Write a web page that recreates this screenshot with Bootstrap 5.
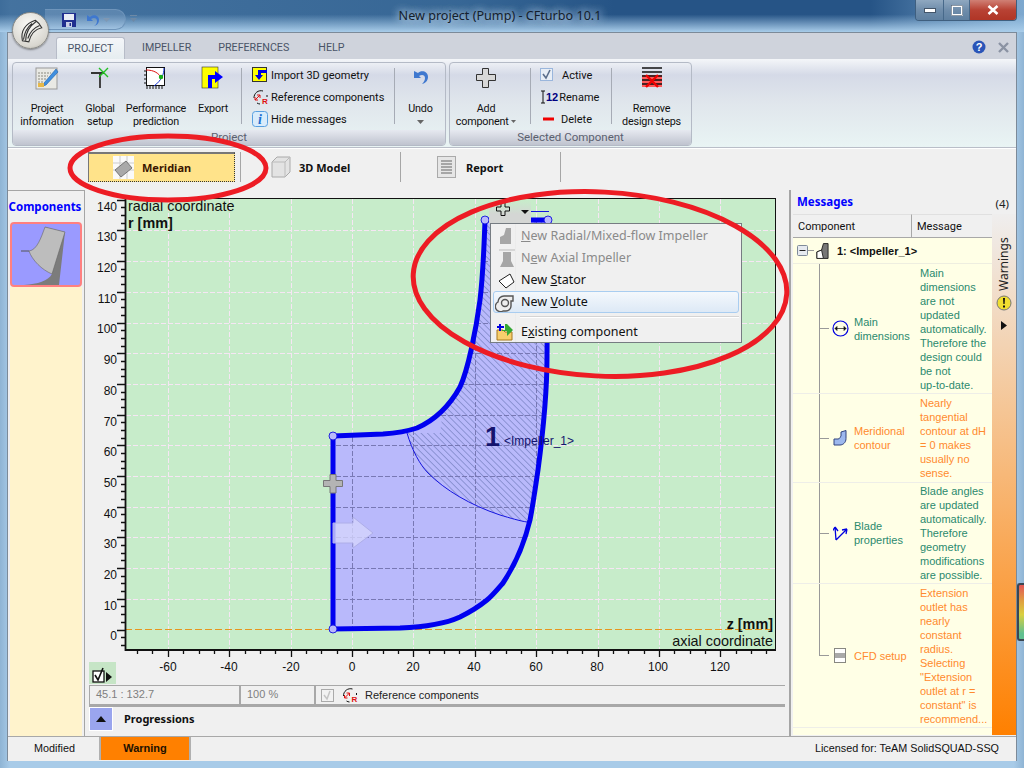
<!DOCTYPE html>
<html lang="en">
<head>
<meta charset="utf-8">
<title>New project (Pump) - CFturbo 10.1</title>
<link href="https://cdn.jsdelivr.net/npm/bootstrap@5.3.0/dist/css/bootstrap.min.css" rel="stylesheet">
<style>
html,body{margin:0;height:768px;overflow:hidden}
body{width:1024px;position:relative;font-family:"Roboto","Liberation Sans",sans-serif;font-size:11px;line-height:13px;color:#111;background:#a9cdea}
.frame{width:1024px;height:768px;background:linear-gradient(90deg,#8fb4d4,#a8cbe8 1%,#a8cbe8 99%,#8fb4d4)}
.titlebar{height:32px;position:relative;background:linear-gradient(90deg,rgba(35,85,135,.75),rgba(35,85,135,.85) 45%,rgba(38,84,134,1) 60%,rgba(38,84,134,1) 85%,rgba(120,165,205,.8) 100%);}
.titlebar::after{content:"";position:absolute;inset:0;background:linear-gradient(180deg,rgba(169,205,234,0) 0,rgba(169,205,234,0) 45%,#a9cdea 100%)}
.title-text{position:relative;z-index:1;font-family:"Noto Sans",sans-serif;font-size:12.6px;color:#14202c;line-height:32px;text-align:center;width:1000px;text-shadow:0 0 8px #cfe3f5,0 0 8px #cfe3f5}
.logo-ball{position:absolute;left:12px;top:12px;width:37px;height:37px;border-radius:50%;background:radial-gradient(circle at 45% 35%,#fbfbf8,#d9d7d0 70%,#a5a39a);border:1px solid #8a8a86;box-shadow:0 1px 2px #0006;z-index:4}
.qat{position:absolute;left:45px;top:9px;width:81px;height:21px;border:1px solid #6f95bb;border-left:0;border-radius:0 11px 11px 0;background:rgba(190,215,240,.22);z-index:3}
.qat-ico{position:absolute;z-index:3}
.winbtns{position:absolute;right:7px;top:0;width:102px;height:21px;z-index:3;border:1px solid #3f5f7f;border-top:0;border-radius:0 0 4px 4px;overflow:hidden}
.winbtn{height:100%;background:linear-gradient(#8fa8c0,#6f8dab 50%,#5f80a0);border-right:1px solid #47698a}
.winbtn.closer{background:linear-gradient(#d08075,#b84234 50%,#b03526);border:0}
.client{height:728px;background:#f0f0f0;border:1px solid #7c8a99;border-width:1px 1px 0 1px;box-sizing:content-box;margin-left:7px;width:1008px}
.rtabs{height:26px;background:#cfd3dc;padding-left:48px;font-size:10.7px;color:#4a5468;position:relative}
.rtab{height:22px;line-height:22px;margin-top:4px;flex:none}
.rtab.on{background:linear-gradient(#f4f6f9,#e6edf0);border:1px solid #b7bcc8;border-bottom:0;border-radius:3px 3px 0 0;width:69px;text-align:center}
.rbar{height:89px;background:linear-gradient(#f4f6f9,#d5dae7 18%,#e0e6ec 50%,#e9f4f4);border-bottom:1px solid #b9bec8;padding:3px 0 2px 4px;gap:3px}
.rgroup{height:84px;border:1px solid #b4bac6;border-radius:4px;position:relative;flex:none}
.rcap{position:absolute;left:0;right:0;bottom:0;height:15px;line-height:15px;text-align:center;font-size:11.5px;color:#5b6070;background:linear-gradient(#e6e9f0,#bfc3cf);border-radius:0 0 3px 3px}
.rbig{text-align:center;padding-top:3px;height:66px;white-space:nowrap;flex:none;font-size:10.8px;letter-spacing:-.2px}
.rbig>svg:first-child{display:block;margin:0 auto 12px}
.rsep{width:1px;height:56px;background:#a6abb5;margin-top:5px;flex:none}
.rsmall{height:22px;white-space:nowrap;gap:3px}
.rsmall svg{flex:none}
.rsmall:first-child{margin-top:1px}
.vbar{height:42px;background:#f0f0f0;border-top:1px solid #fff;padding-left:80px;font-family:"Noto Sans",sans-serif;font-weight:700;font-size:11px}
.vtab{height:30px;margin-top:3px;border-right:1px solid #a6a6a6;gap:8px;flex:none}
.vtab.on{width:153px;padding-right:5px}
.vin{background:#ffe38a;border:1px dotted #333;border-left:1px solid #777;border-top:2px solid #777;height:30px;width:148px;padding-left:24px;gap:8px}
.mainrow{height:546px}
.leftp{width:77px;border:1px solid #a5a5a5;border-width:1px 1px 0 0;padding:0 2px;flex:none}
.leftp-h{height:31px;color:#0000ff;font-family:"Noto Sans",sans-serif;font-weight:700;font-size:11.5px;line-height:31px;text-align:center;white-space:nowrap;margin-left:-2px}
.thumb{width:72px;height:65px;border:2px solid #ff8080;border-radius:4px;background:#9a9aff;overflow:hidden}
.cream{background:#fff3cc;height:449px}
.midc{width:704px;padding:0 4px;flex:none}
.plot{display:block;margin-left:-4px}
.plot text{font-family:"Liberation Sans",sans-serif;font-size:12px;fill:#111}
.infor{height:19px;border-top:1px solid #a8a8a8;border-left:1px solid #a8a8a8;color:#7f7f7f;font-family:"Liberation Sans",sans-serif;font-size:11px;line-height:17px}
.icell{border-right:2px solid #a8a8a8;padding-left:6px;white-space:nowrap;flex:none}
.prog{height:28px;border-top:3px solid #a8a8a8;padding-top:0;gap:11px;font-family:"Noto Sans",sans-serif;font-weight:700;font-size:11px;color:#111}
.progbtn{width:24px;height:24px;background:#9aa5ee;border:1px solid #fff}
.rightp{width:227px;border-left:2px solid #a5a5a5;padding-left:2px;flex:none}
.msg-h{height:24px;font-family:"Noto Sans",sans-serif;font-weight:700;color:#0000ff;font-size:11.5px;line-height:24px;padding:0 7px 0 4px}
.th{height:24px;line-height:24px;padding-left:5px;font-size:11px;background:#f0f0f0;border-top:1px solid #e0e0e0;border-bottom:1px solid #a8a8a8}
.tree{width:199px;background:#ffffe6;height:497px;font-family:"Liberation Sans",sans-serif;font-size:11px;line-height:14px}
.troot{height:26px;font-weight:700;font-size:11px;padding-left:4px;color:#111;border-bottom:1px solid #eeeee0}
.trow{border-bottom:1px solid #eeeee8;padding-left:26px;white-space:nowrap}
.rail{width:10px;flex:none;background:linear-gradient(#999,#999) left top/1px 100% no-repeat,linear-gradient(#999,#999) left center/10px 1px no-repeat}
.rail.lastr{background:linear-gradient(#999,#999) left top/1px 50% no-repeat,linear-gradient(#999,#999) left center/10px 1px no-repeat}
.tico{width:25px;flex:none;padding-left:3px}
.tname{width:66px;flex:none}
.tmsg{padding-top:2px;padding-bottom:2px}
.tgreen{color:#2b8a6e}
.torange{color:#ff8a2e}
.strip{width:24px;height:521px;background:linear-gradient(#efeeee,#f7b878 50%,#ff8000);padding-top:19px}
.vtext{writing-mode:vertical-rl;transform:rotate(180deg);line-height:24px;height:58px;color:#222;font-family:"Noto Sans",sans-serif;font-size:12px}
.stat{height:24px;border-top:1px solid #a8a8a8;background:#f0f0f0;padding-left:2px;font-size:10.8px;font-family:"Liberation Sans",sans-serif}
.scell{height:23px;line-height:22px;text-align:center;border-right:2px solid #b0b0b0;flex:none}
.over{position:absolute;left:0;top:0;pointer-events:none;z-index:20}
.ctxbar{position:absolute;left:489px;top:200px;width:42px;height:24px;background:linear-gradient(rgba(212,214,212,0),#d4d6d4 60%);z-index:10}
.ctx{position:absolute;left:490px;top:223px;width:252px;height:120px;display:block;padding:1px 2px 0;margin:0;min-width:0;border:1px solid #767c82;border-radius:0;background:linear-gradient(90deg,#f0f0f0 24px,#d8d8d8 24px,#fff 25px,#f0f0f0 25px);color:#111;z-index:10;font-family:"Noto Sans",sans-serif}
.ctx-i{height:22px;padding:0 0 0 27px;font-size:12.5px;line-height:20px;position:relative;color:#111;border:1px solid transparent;white-space:nowrap}
.ctx-i svg{position:absolute;left:1px;top:0}
.ctx-i.off{color:#8a8a8a}
.ctx-i.hov{background:linear-gradient(#f4f8fc,#dde9f6);border-color:#a9cdf0;border-radius:3px}
.ctx-sep{height:1px;background:#d4d4d4;margin:3px 0 3px 27px;border-bottom:1px solid #fff;box-sizing:content-box}
.edgebit{position:absolute;left:1017px;top:583px;width:7px;height:58px;background:linear-gradient(#e25757,#e0a040 30%,#d9d040 55%,#60c090 90%);border:2px solid #3b4652;border-right:0;border-radius:3px 0 0 3px;z-index:5}
.lic{white-space:nowrap;padding-right:17px}
</style>
</head>
<body>
<div class="frame d-flex flex-column">
  <div class="titlebar">
    <div class="title-text">New project (Pump) - CFturbo 10.1</div>
    <div class="logo-ball d-flex align-items-center justify-content-center">
      <svg width="28" height="28" viewBox="0 0 26 26" fill="none" stroke="#333" stroke-width="1"><path d="M5 22C3 13 8 6 17 3c3 2 5 5 6 7-5 1-10 5-12 13z"/><path d="M8 22c0-7 3-13 10-18M14 6c-4 3-7 8-8 15M21 8c-5 2-9 6-11 12"/></svg>
    </div>
    <div class="qat"></div>
    <svg class="qat-ico" style="left:62px;top:13px" width="14" height="14" viewBox="0 0 14 14"><path d="M0 0h14v14H0z" fill="#1f2f8f"/><path d="M2 1h10v6H2z" fill="#e8ecf5"/><path d="M4 9h6v5H4z" fill="#c8cfe6"/><path d="M7.500 10h1.500v3H7.500z" fill="#1f2f8f"/></svg>
    <svg class="qat-ico" style="left:86px;top:13px" width="13" height="14" viewBox="0 0 13 14"><path d="M1 2v6h6L5 6c3-2 6-1 6 2 0 2-1 4-3 5 4-1 5-4 5-6 0-5-6-6-9-3z" fill="#3f78cf"/></svg>
    <svg class="qat-ico" style="left:103px;top:18px;z-index:5" width="7" height="4"><path d="M0 0h7L3.500 4z" fill="#7f98b3"/></svg>
    <svg class="qat-ico" style="left:130px;top:15px;z-index:5" width="7" height="8"><path d="M0 0h7v1H0zM0 3h7L3.500 7z" fill="#6d89a6"/></svg>
    <div class="winbtns d-flex">
      <div class="winbtn d-flex align-items-center justify-content-center" style="width:28px"><svg width="12" height="6"><rect x=".5" y="1.500" width="11" height="4" fill="#fff" stroke="#44566a"/></svg></div>
      <div class="winbtn d-flex align-items-center justify-content-center" style="width:26px"><svg width="12" height="11"><rect x="1" y="1" width="10" height="9" fill="none" stroke="#fff" stroke-width="2"/><rect x=".5" y=".5" width="11" height="10" fill="none" stroke="#44566a" stroke-width=".6"/></svg></div>
      <div class="winbtn closer flex-grow-1 d-flex align-items-center justify-content-center"><svg width="12" height="10"><path d="M1.500 1l9 8M10.500 1l-9 8" stroke="#fff" stroke-width="2.600"/></svg></div>
    </div>
  </div>

  <div class="client">
    <div class="rtabs d-flex">
      <div class="rtab on">PROJECT</div>
      <div class="rtab" style="margin-left:17px">IMPELLER</div>
      <div class="rtab" style="margin-left:27px">PREFERENCES</div>
      <div class="rtab" style="margin-left:29px">HELP</div>
      <div class="ms-auto d-flex align-items-center gap-2 pe-1" style="padding-top:2px">
        <svg width="14" height="14" viewBox="0 0 14 14"><circle cx="7" cy="7" r="6.500" fill="#2a55b8"/><text x="7" y="11" text-anchor="middle" font-family="Liberation Sans" font-weight="700" font-size="11" fill="#fff">?</text></svg>
        <svg width="11" height="11" class="ms-1" style="margin-right:3px"><path d="M1 1l9 9M10 1l-9 9" stroke="#8b93a3" stroke-width="2.400"/></svg>
      </div>
    </div>

    <div class="rbar d-flex">
      <div class="rgroup d-flex" style="width:434px">
        <div class="rbig" style="width:68px">
          <svg width="24" height="24" viewBox="0 0 24 24"><rect x="1" y="2" width="21" height="21" fill="#e9e9e4" stroke="#999"/><path d="M3 7h13M3 10h10M3 13h8M3 16h6" stroke="#8a8a80" stroke-dasharray="2 1"/><path d="M9 17 21 3l2 3-12 13-3 1z" fill="#3f8fe0" stroke="#1f5fa8" stroke-width=".6"/><rect x="3" y="17" width="6" height="4" fill="#e6b84a"/></svg>
          Project<br>information
        </div>
        <div class="rbig" style="width:38px">
          <svg width="24" height="24" viewBox="0 0 24 24"><path d="M3 7h13M12 7v15" stroke="#333" stroke-width="1.800" fill="none"/><path d="M11 2l9 9M20 2l-9 9" stroke="#22c022" stroke-width="1.400"/></svg>
          Global<br>setup
        </div>
        <div class="rbig" style="width:74px">
          <svg width="24" height="24" viewBox="0 0 24 24"><rect x="2.500" y="1.500" width="18" height="18" fill="#fff" stroke="#111"/><path d="M2 4c8 0 13 3 16 9" stroke="#e01010" fill="none"/><path d="M20 2c0 6-2 12-10 18" stroke="#1030d0" fill="none"/><circle cx="17" cy="11" r="2.200" fill="#18b018"/><path d="M3 20v3M6 20v3M9 20v3M12 20v3M15 20v3M18 20v3M0 5h2M0 9h2M0 13h2M0 17h2" stroke="#111"/></svg>
          Performance<br>prediction
        </div>
        <div class="rbig" style="width:40px">
          <svg width="24" height="24" viewBox="0 0 24 24"><rect x="1" y="1" width="16" height="21" fill="#ffff00" stroke="#333" stroke-width=".6"/><path d="M7 22V9h7V5l8 6-8 6v-4h-3v9z" fill="#0000ff"/></svg>
          Export
        </div>
        <div class="rsep" style="margin-left:8px"></div>
        <div style="width:152px;padding:0 0 0 10px;flex:none">
          <div class="rsmall d-flex align-items-center"><svg width="16" height="16" viewBox="0 0 16 16"><rect x=".5" y=".5" width="14" height="14" fill="#ffff00" stroke="#333"/><path d="M15 3H6v5H3l4 5 4-5H9V6h6z" fill="#0000e0"/></svg>Import 3D geometry</div>
          <div class="rsmall d-flex align-items-center"><svg width="16" height="16" viewBox="0 0 16 16" fill="none"><path d="M2 9a7 7 0 0 1 9-7M15 6v2M5 14a7 7 0 0 0 3 1" stroke="#111"/><path d="M3 11l5-5M3 8v3h3M8 9V6H5" stroke="#e01010"/><text x="10" y="15" font-family="Liberation Sans" font-weight="700" font-size="8" fill="#e01010">R</text></svg>Reference components</div>
          <div class="rsmall d-flex align-items-center"><svg width="16" height="16" viewBox="0 0 16 16"><rect x=".5" y=".5" width="15" height="15" rx="3" fill="#d8ecfb" stroke="#58a0e0"/><text x="8" y="13" text-anchor="middle" font-family="Liberation Serif" font-weight="700" font-style="italic" font-size="14" fill="#1f6fd0">i</text></svg>Hide messages</div>
        </div>
        <div class="rsep"></div>
        <div class="rbig" style="width:51px">
          <svg width="18" height="24" viewBox="0 0 18 24"><path d="M2 5v7h7L7 10c3-2 6-1 6 2 0 2-1 4-3 6 5-1 6-5 6-7 0-6-7-7-10-4z" fill="#3f78cf"/></svg>
          Undo<br><svg width="7" height="4" style="vertical-align:1px"><path d="M0 0h7L3.500 4z" fill="#666"/></svg>
        </div>
        <div class="rcap">Project</div>
      </div>
      <div class="rgroup d-flex" style="width:243px">
        <div class="rbig" style="width:80px;padding-right:8px">
          <svg width="24" height="24" viewBox="0 0 24 24"><path d="M8.500 2.500h6v6h7v6h-7v7h-6v-7h-6v-6h6z" fill="#d8d8d8" stroke="#333"/></svg>
          Add<br>component <svg style="vertical-align:2px" width="5" height="3"><path d="M0 0h5L2.500 3z" fill="#666"/></svg>
        </div>
        <div class="rsep"></div>
        <div style="width:80px;padding:0 0 0 9px;flex:none">
          <div class="rsmall d-flex align-items-center"><svg width="14" height="14" viewBox="0 0 14 14"><rect x=".5" y=".5" width="12" height="12" fill="#e8eef6" stroke="#9ab6dc"/><path d="M3 6l3 4 4-8" stroke="#5b6f8c" stroke-width="1.600" fill="none"/></svg><span style="margin-left:5px">Active</span></div>
          <div class="rsmall d-flex align-items-center" style="gap:1px"><svg width="14" height="16" viewBox="0 0 14 16"><path d="M1 2h4M1 14h4M3 2v12" stroke="#111"/></svg><span style="font-weight:700;color:#000080;font-family:'Liberation Sans';font-size:11px;margin-left:-9px">12</span><span>Rename</span></div>
          <div class="rsmall d-flex align-items-center"><svg width="14" height="8" class="me-1"><rect x="3" y="2.500" width="11" height="3" fill="#f00000"/></svg>Delete</div>
        </div>
        <div class="rsep"></div>
        <div class="rbig flex-grow-1">
          <svg width="24" height="24" viewBox="0 0 24 24"><rect x="2" y="9" width="20" height="12" fill="#ff5a5a"/><path d="M2 2h20M2 6h20M2 10h20M2 14h20M2 18h20" stroke="#111" stroke-width="1.400"/><path d="M6 9l12 12M18 9L6 21" stroke="#f00000" stroke-width="2.400"/></svg>
          Remove<br>design steps
        </div>
        <div class="rcap">Selected Component</div>
      </div>
    </div>

    <div class="vbar d-flex">
      <div class="vtab on d-flex">
        <div class="vin d-flex align-items-center">
          <svg width="21" height="23" viewBox="0 0 21 23"><rect width="21" height="23" fill="#fafafa"/><path d="M7 0v23M14 0v23M0 7h21M0 14h21" stroke="#ccc"/><path d="M2 14 13 5l6 7-11 9z" fill="#a9a9a9" stroke="#777"/></svg>
          <span style="color:#3a1600">Meridian</span>
        </div>
      </div>
      <div class="vtab d-flex align-items-center" style="width:160px;padding-left:30px">
        <svg width="20" height="22" viewBox="0 0 20 22"><path d="M1 6 6 1h13v15l-5 5H1z" fill="#e3e3e3" stroke="#aaa"/><path d="M1 6h13v15M14 6l5-5" fill="none" stroke="#bbb"/></svg>
        <span>3D Model</span>
      </div>
      <div class="vtab d-flex align-items-center" style="width:160px;padding-left:36px;gap:10px">
        <svg width="19" height="22" viewBox="0 0 19 22"><rect x=".5" y=".5" width="18" height="21" fill="#e6e6e6" stroke="#aaa"/><path d="M4 5h11M4 8h11M4 11h11M4 14h11M4 17h11" stroke="#666"/></svg>
        <span>Report</span>
      </div>
    </div>

    <div class="mainrow d-flex">
      <div class="leftp">
        <div class="leftp-h">Components</div>
        <div class="thumb">
          <svg width="68" height="61" viewBox="0 0 68 61"><path d="M33 3 53 8 47 61H12c14-1 24-4 28-11z" fill="#7c7c7c"/><path d="M33 3 53 8 40 50C30 46 20 36 17 27 25 26 29 14 33 3z" fill="#bdbdbd" stroke="#666" stroke-width=".6"/><path d="M9 27h8" stroke="#555"/></svg>
        </div>
        <div class="cream"></div>
      </div>

      <div class="midc d-flex flex-column">
        <svg class="plot" width="704" height="495" viewBox="85 190 704 495">
          <defs>
            <pattern id="hatch" width="4.500" height="4.500" patternUnits="userSpaceOnUse" patternTransform="rotate(-45)"><path d="M0 0V4.500" stroke="#5566a4" stroke-width=".9"/></pattern>
            <clipPath id="shapeclip"><path d="M333 436L383 434C398 433 408 431 417 428C435 420 450 405 460 387C468 370 476 330 480 300C483 275 484 250 485 220L548 220L547 357C547 390 542 440 538 470C535 490 533 505 530 520C524 545 515 565 503 583C497 590 492 596 487 600C476 609 468 613 460 617C447 623 425 627 400 628L333 629Z"/></clipPath>
          </defs>
          <rect x="125.500" y="198.500" width="650" height="451" fill="#c7ecca"/>
          <path id="grid" fill="none" stroke="#f6e6f4" stroke-dasharray="5 2"/>
          <path d="M333 436L383 434C398 433 408 431 417 428C435 420 450 405 460 387C468 370 476 330 480 300C483 275 484 250 485 220L548 220L547 357C547 390 542 440 538 470C535 490 533 505 530 520C524 545 515 565 503 583C497 590 492 596 487 600C476 609 468 613 460 617C447 623 425 627 400 628L333 629Z" fill="#b9b9fb"/>
          <path d="M407 433C412 450 420 465 428 473C445 490 470 505 500 515C510 518 520 521 527 522L560 522L560 210L470 210L440 433Z" fill="url(#hatch)" clip-path="url(#shapeclip)"/>
          <path id="gridin" fill="none" stroke="#7878b4" stroke-dasharray="5 2" clip-path="url(#shapeclip)"/>
          <path d="M407 433C412 450 420 465 428 473C445 490 470 505 500 515C510 518 520 521 527 522" fill="none" stroke="#1515e0"/>
          <path d="M125 629.500H775" stroke="#e8961e" stroke-dasharray="7 3"/>
          <path d="M333 436L383 434C398 433 408 431 417 428C435 420 450 405 460 387C468 370 476 330 480 300C483 275 484 250 485 220H548L547 357C547 390 542 440 538 470C535 490 533 505 530 520C524 545 515 565 503 583C497 590 492 596 487 600C476 609 468 613 460 617C447 623 425 627 400 628L333 629V436" fill="none" stroke="#0000f0" stroke-width="5"/>
          <circle cx="333" cy="436" r="4" fill="#b9b9fb" stroke="#2222e0"/>
          <circle cx="333" cy="629" r="4" fill="#b9b9fb" stroke="#2222e0"/>
          <circle cx="485" cy="220" r="4" fill="#b9b9fb" stroke="#2222e0"/>
          <circle cx="548" cy="220" r="4" fill="#b9b9fb" stroke="#2222e0"/>
          <path d="M531 211.500H549" stroke="#1515e0"/>
          <path d="M330 474.500h6v6h6.500v6H336v6.500h-6V486.500h-6.500v-6H330z" fill="#b4b4b4" stroke="#777"/>
          <path d="M333 523h20v-6l20 16-20 15v-5h-20z" fill="#d4d4fd" fill-opacity=".8" stroke="#aeaee8"/>
          <path id="axis" fill="none" stroke="#111" stroke-width="1.300"/>
          <rect x="125.500" y="198.500" width="650" height="451" fill="none" stroke="#111"/>
          <path d="M125.500 198V650H776" fill="none" stroke="#111" stroke-width="1.800"/>
          <text x="128" y="211" style="font-size:14.400px">radial coordinate</text>
          <text x="128" y="228" style="font-size:14.400px;font-weight:700">r [mm]</text>
          <text x="773" y="629" text-anchor="end" style="font-size:14.400px;font-weight:700">z [mm]</text>
          <text x="773" y="646" text-anchor="end" style="font-size:14.400px">axial coordinate</text>
          <text x="485" y="446" style="font-size:27px;font-weight:700;fill:#14146e">1</text>
          <text x="504" y="445" style="font-size:12px;fill:#14146e">&lt;Impeller_1&gt;</text>
          <g text-anchor="end">
            <text x="117" y="211">140</text><text x="117" y="241">130</text><text x="117" y="272">120</text><text x="117" y="303">110</text><text x="117" y="333">100</text>
            <text x="117" y="364">90</text><text x="117" y="395">80</text><text x="117" y="426">70</text><text x="117" y="456">60</text><text x="117" y="487">50</text>
            <text x="117" y="518">40</text><text x="117" y="548">30</text><text x="117" y="579">20</text><text x="117" y="610">10</text><text x="117" y="640">0</text>
          </g>
          <g text-anchor="middle">
            <text x="168" y="671">-60</text><text x="229" y="671">-40</text><text x="291" y="671">-20</text><text x="352" y="671">0</text><text x="413" y="671">20</text>
            <text x="474" y="671">40</text><text x="536" y="671">60</text><text x="597" y="671">80</text><text x="658" y="671">100</text><text x="720" y="671">120</text>
          </g>
          <rect x="89" y="662" width="27" height="22" fill="#c6e5c6"/>
          <rect x="93" y="671" width="11" height="11" fill="#fff" stroke="#111" stroke-width="1.300"/>
          <path d="M95 675l3 5 5-12" fill="none" stroke="#111" stroke-width="1.600"/>
          <path d="M106 672l6 5-6 5z" fill="#111"/>
        </svg>
        <div class="infor d-flex">
          <div class="icell" style="width:151px">45.1 : 132.7</div>
          <div class="icell" style="width:75px">100 %</div>
          <div class="d-flex align-items-center flex-grow-1" style="padding-left:5px;color:#222;gap:7px">
            <svg width="13" height="13" viewBox="0 0 13 13"><rect x=".5" y=".5" width="12" height="12" fill="#f2f2f2" stroke="#aaa"/><path d="M3 6l3 4 3-8" stroke="#c4c4c4" stroke-width="1.500" fill="none"/></svg>
            <svg width="17" height="16" viewBox="0 0 16 16" fill="none"><path d="M2 9a7 7 0 0 1 9-7M15 6v2M5 14a7 7 0 0 0 3 1" stroke="#111"/><path d="M3 11l5-5M3 8v3h3M8 9V6H5" stroke="#e01010"/><text x="10" y="15" font-family="Liberation Sans" font-weight="700" font-size="8" fill="#e01010">R</text></svg>
            <span>Reference components</span>
          </div>
        </div>
        <div class="prog d-flex align-items-start">
          <div class="progbtn d-flex align-items-center justify-content-center"><svg width="10" height="6"><path d="M0 6 5 0l5 6z" fill="#111"/></svg></div>
          <span style="line-height:24px">Progressions</span>
        </div>
      </div>

      <div class="rightp">
        <div class="msg-h d-flex justify-content-between">
          <span>Messages</span><span style="color:#222;font-weight:400;padding-top:2px">(4)</span>
        </div>
        <div class="d-flex">
          <div style="width:199px;flex:none">
            <div class="d-flex">
              <div class="th" style="width:119px;border-right:1px solid #a8a8a8">Component</div>
              <div class="th flex-grow-1">Message</div>
            </div>
            <div class="tree">
              <div class="troot d-flex align-items-center">
                <svg width="11" height="11"><rect x=".5" y=".5" width="10" height="10" rx="1" fill="#e6eaf0" stroke="#7f8b99"/><path d="M2.500 5.500h6" stroke="#222"/></svg>
                <svg width="8" height="3"><path d="M0 1.500h6" stroke="#999"/></svg>
                <svg width="13" height="18" viewBox="0 0 14 18"><path d="M1 17v-7l5-2 2-7h5v16z" fill="#777" stroke="#222"/><path d="M1 17v-7l5-2 2 9z" fill="#fff" stroke="#222"/></svg>
                <span style="margin-left:8px">1: &lt;Impeller_1&gt;</span>
              </div>
              <div class="trow tgreen d-flex align-items-center" style="height:130px">
                <div class="rail align-self-stretch"></div>
                <div class="tico"><svg width="17" height="17" viewBox="0 0 17 17"><circle cx="8.500" cy="8.500" r="7.500" fill="none" stroke="#0000e0" stroke-width="1.200"/><path d="M3 8.500h11M3 8.500l2-2v4zM14 8.500l-2-2v4z" stroke="#111" fill="#111" stroke-width=".7"/></svg></div>
                <div class="tname">Main<br>dimensions</div>
                <div class="tmsg">Main<br>dimensions<br>are not<br>updated<br>automatically.<br>Therefore the<br>design could<br>be not<br>up-to-date.</div>
              </div>
              <div class="trow torange d-flex align-items-center" style="height:89px">
                <div class="rail align-self-stretch"></div>
                <div class="tico"><svg width="14" height="16" viewBox="0 0 14 16" style="margin-left:1px"><path d="M13 .500v8c0 4-3 6.500-6 6.500H1V9h4c2 0 2-2 3-3V2z" fill="#9db8ee" stroke="#33457f"/></svg></div>
                <div class="tname">Meridional<br>contour</div>
                <div class="tmsg">Nearly<br>tangential<br>contour at dH<br>= 0 makes<br>usually no<br>sense.</div>
              </div>
              <div class="trow tgreen d-flex align-items-center" style="height:101px">
                <div class="rail align-self-stretch"></div>
                <div class="tico"><svg width="15" height="15" viewBox="0 0 15 15" style="margin-left:1px"><path d="M3 14 2 1M2 1-.5 5M2 1l3 4M3 14 14 3M14 3l-5 1M14 3l-1 5" stroke="#0000e0" stroke-width="1.300" fill="none"/></svg></div>
                <div class="tname">Blade<br>properties</div>
                <div class="tmsg">Blade angles<br>are updated<br>automatically.<br>Therefore<br>geometry<br>modifications<br>are possible.</div>
              </div>
              <div class="trow torange d-flex align-items-center" style="height:144px">
                <div class="rail lastr align-self-stretch"></div>
                <div class="tico"><svg width="12" height="15" viewBox="0 0 12 15" style="margin-left:2px"><rect x=".5" y=".5" width="11" height="14" fill="#fff" stroke="#111" stroke-dasharray="1 1"/><rect x="1" y="5" width="10" height="5" fill="#a9a9a9"/></svg></div>
                <div class="tname">CFD setup</div>
                <div class="tmsg">Extension<br>outlet has<br>nearly<br>constant<br>radius.<br>Selecting<br>"Extension<br>outlet at r =<br>constant" is<br>recommend...</div>
              </div>
            </div>
          </div>
          <div class="strip d-flex flex-column align-items-center">
            <div class="vtext">Warnings</div>
            <svg class="mt-1" width="16" height="16" viewBox="0 0 16 16"><circle cx="8" cy="8" r="7" fill="#f0de30" stroke="#777"/><path d="M7 3h2l-.4 6h-1.200zM7 10.500h2v2H7z" fill="#111"/></svg>
            <svg style="margin-top:10px" width="6" height="9"><path d="M0 0l6 4.500L0 9z" fill="#111"/></svg>
          </div>
        </div>
      </div>
    </div>

    <div class="stat d-flex">
      <div class="scell" style="width:91px">Modified</div>
      <div class="scell" style="width:90px;background:#ff8000;font-weight:700;color:#221100;font-size:11px">Warning</div>
      <div class="lic ms-auto" style="line-height:22px">Licensed for: TeAM SolidSQUAD-SSQ</div>
    </div>
  </div>
</div>

<div class="ctxbar">
  <svg style="position:absolute;left:7px;top:2px" width="14" height="14" viewBox="0 0 14 14"><path d="M5 .500h4v4.500h4.500v4H9v4.500H5V9H.500V5H5z" fill="none" stroke="#111"/></svg>
  <svg style="position:absolute;left:32px;top:10px" width="8" height="4"><path d="M0 0h8L4 4z" fill="#111"/></svg>
</div>
<div class="ctx dropdown-menu">
  <div class="ctx-i off"><svg width="20" height="20" viewBox="0 0 20 20"><path d="M5 18v-7l4-2 2-7h5v16z" fill="#a6a6a6"/></svg><u>N</u>ew Radial/Mixed-flow Impeller</div>
  <div class="ctx-i off"><svg width="20" height="20" viewBox="0 0 20 20"><path d="M4 2h16" stroke="#bbb"/><path d="M8 4h8v9l3 6H5l3-6z" fill="#a6a6a6"/></svg>N<u>e</u>w Axial Impeller</div>
  <div class="ctx-i"><svg width="20" height="20" viewBox="0 0 20 20"><path d="M4 11l11-7 4 8-8 6z" fill="#fff" stroke="#222"/></svg>New <u>S</u>tator</div>
  <div class="ctx-i hov"><svg width="20" height="20" viewBox="0 0 20 20"><path d="M3 10a6 6 0 0 1 6-6h9v5h-2v5a5 5 0 0 1-5 5H8a5 5 0 0 1-5-9z" fill="#eee" stroke="#555" stroke-width="1.400"/><circle cx="10" cy="11" r="3.500" fill="none" stroke="#555" stroke-width="1.400"/></svg>New <u>V</u>olute</div>
  <div class="ctx-sep"></div>
  <div class="ctx-i" style="margin-top:2px"><svg width="20" height="20" viewBox="0 0 20 20"><path d="M2 8h6l2 2h7v8H2z" fill="#f7cf6d" stroke="#a8781f"/><path d="M7 7h3V1h2l6 6-6 6V8H7z" fill="#35a835" transform="translate(0 1)"/><path d="M5 2v7M2 5h7" stroke="#0000e0" stroke-width="2"/></svg>E<u>x</u>isting component</div>
</div>
<div class="edgebit"></div>
<svg class="over" width="1024" height="768">
  <ellipse cx="168" cy="168" rx="98" ry="32" fill="none" stroke="#ed1c24" stroke-width="5"/>
  <ellipse cx="600" cy="284" rx="187" ry="92" fill="none" stroke="#ed1c24" stroke-width="5" transform="rotate(3 600 284)"/>
</svg>
<script>
(function(){
  var g='',a='';var x0=352,y0=629.5,s=3.07;
  for(var z=-60;z<=120;z+=20){var x=Math.round(x0+z*s)+.5;g+='M'+x+' 199V649';}
  for(var r=10;r<=130;r+=10){var y=Math.round(y0-r*s)+.5;g+='M126 '+y+'H775';}
  for(var q=-75;q<=135;q+=5){var xx=Math.round(x0+q*s)+.5;if(xx>125&&xx<776)a+='M'+xx+' 650V'+(q%20===0?657:654);}
  for(var t=-5;t<=140;t+=2.5){var yy=Math.round(y0-t*s)+.5;if(yy>198&&yy<650)a+='M125 '+yy+'H'+(t%10===0?117:121);}
  document.getElementById('grid').setAttribute('d',g);
  document.getElementById('gridin').setAttribute('d',g);
  document.getElementById('axis').setAttribute('d',a);
})();
</script>
<script src="https://cdn.jsdelivr.net/npm/bootstrap@5.3.0/dist/js/bootstrap.bundle.min.js"></script>
</body>
</html>
